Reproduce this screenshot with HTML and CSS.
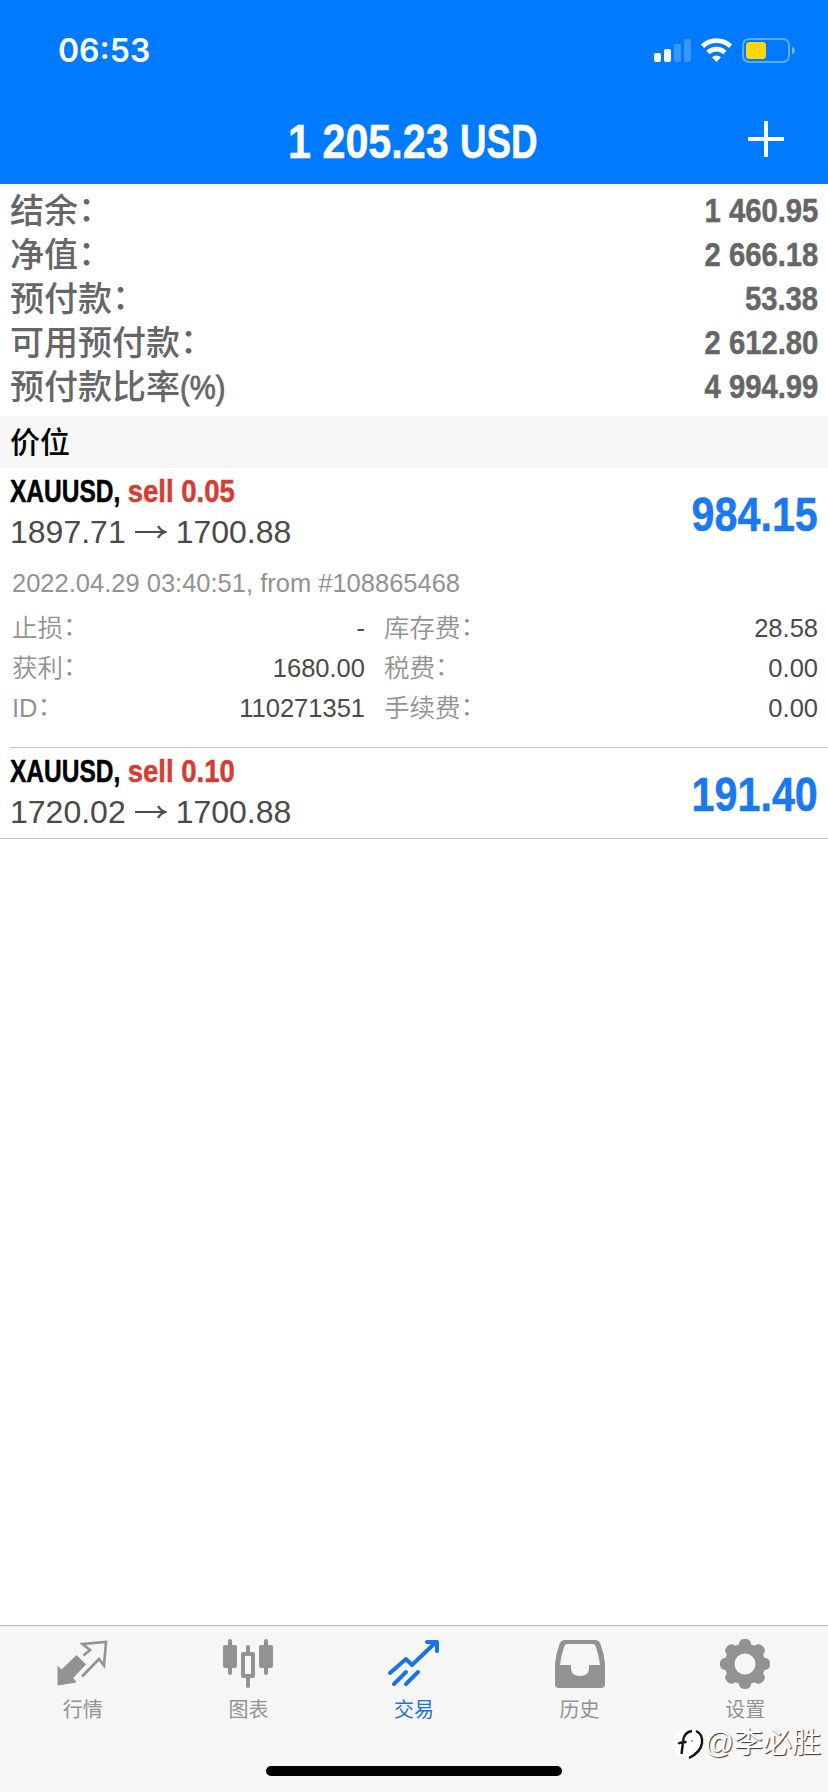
FILE: index.html
```html
<!DOCTYPE html>
<html lang="zh-CN">
<head>
  <meta charset="UTF-8">
  <meta name="viewport" content="width=device-width, initial-scale=1.0">
  <title>交易</title>
  <link rel="stylesheet" href="styles.css">
</head>
<body>

  <header class="header">
    <div class="statusBar">
      <span class="clock">06:53</span>
      <svg class="statusIcons" width="146" height="28" viewBox="0 0 146 28">
        <!-- signal -->
        <rect x="3" y="16" width="7" height="9" rx="2" fill="#fff"/>
        <rect x="13" y="12" width="7" height="13" rx="2" fill="#fff"/>
        <rect x="23" y="7" width="7" height="18" rx="2" fill="#fff" opacity=".22"/>
        <rect x="33" y="2" width="7" height="23" rx="2" fill="#fff" opacity=".22"/>
        <!-- wifi -->
        <g fill="none" stroke="#fff" stroke-width="4.8">
          <path d="M51.5 9.200a20.500 20.500 0 0 1 28 0"/>
          <path d="M57 15.500a12.500 12.500 0 0 1 17 0"/>
        </g>
        <path d="M65.500 25l-4.500-4.700a6.500 6.500 0 0 1 9 0z" fill="#fff"/>
        <!-- battery -->
        <rect x="92" y="2" width="46" height="23" rx="6" fill="none" stroke="#fff" stroke-width="2" opacity=".38"/>
        <path d="M141 9.500q3 1.500 3 4t-3 4z" fill="#fff" opacity=".45"/>
        <rect x="95" y="5" width="20" height="17" rx="3.500" fill="#ffd60a"/>
      </svg>
    </div>
    <div class="titleBar">
      <h1 class="title condensed">1 205.23 <span class="currency">USD</span></h1>
      <svg class="addButton" width="36" height="36" viewBox="0 0 36 36">
        <path d="M18 0v36M0 18h36" stroke="#fff" stroke-width="4"/>
      </svg>
    </div>
  </header>

  <main>
    <div class="summary">
      <div class="summaryRow"><span>结余<span class="colon">：</span></span><span class="amount condensed">1 460.95</span></div>
      <div class="summaryRow"><span>净值<span class="colon">：</span></span><span class="amount condensed">2 666.18</span></div>
      <div class="summaryRow"><span>预付款<span class="colon">：</span></span><span class="amount condensed">53.38</span></div>
      <div class="summaryRow"><span>可用预付款<span class="colon">：</span></span><span class="amount condensed">2 612.80</span></div>
      <div class="summaryRow"><span>预付款比率<span class="percent">(%)</span></span><span class="amount condensed">4 994.99</span></div>
    </div>

    <h2 class="sectionTitle">价位</h2>

    <section class="position">
      <div class="positionMain">
        <div>
          <div class="symbol condensed"><span class="pair">XAUUSD,</span> <span class="sell">sell 0.05</span></div>
          <div class="prices">
            <span>1897.71</span>
            <svg class="arrow" width="32" height="16" viewBox="0 0 32 16"><path d="M0 8h30M23 2q2.500 4.500 7 6q-4.500 1.500-7 6"/></svg>
            <span>1700.88</span>
          </div>
        </div>
        <div class="profit condensed">984.15</div>
      </div>
      <div class="opened">2022.04.29 03:40:51, from #108865468</div>
      <dl class="details">
        <dt>止损<span class="colon">：</span></dt><dd>-</dd>
        <dt>库存费<span class="colon">：</span></dt><dd>28.58</dd>
        <dt>获利<span class="colon">：</span></dt><dd>1680.00</dd>
        <dt>税费<span class="colon">：</span></dt><dd>0.00</dd>
        <dt>ID<span class="colon">：</span></dt><dd>110271351</dd>
        <dt>手续费<span class="colon">：</span></dt><dd>0.00</dd>
      </dl>
    </section>

    <section class="position last">
      <div class="positionMain">
        <div>
          <div class="symbol condensed"><span class="pair">XAUUSD,</span> <span class="sell">sell 0.10</span></div>
          <div class="prices">
            <span>1720.02</span>
            <svg class="arrow" width="32" height="16" viewBox="0 0 32 16"><path d="M0 8h30M23 2q2.500 4.500 7 6q-4.500 1.500-7 6"/></svg>
            <span>1700.88</span>
          </div>
        </div>
        <div class="profit condensed">191.40</div>
      </div>
    </section>
  </main>

  <footer class="footer">
    <nav class="tabs">
      <a class="tab">
        <svg width="52" height="52" viewBox="0 0 52 52">
          <path d="M1 28.500l3.500 3.500L19.500 17.500l9 9L15.700 40l3.300 4-18 3z" fill="#929292" stroke="#929292" stroke-linejoin="round"/>
          <path d="M26.500 17.500l6.500-5.500-7.500-6L49 4l-2 23.500-5-6.500-17 17.500" fill="none" stroke="#929292" stroke-width="2.600"/>
        </svg>
        <span>行情</span>
      </a>
      <a class="tab">
        <svg width="52" height="52" viewBox="0 0 52 52">
          <g fill="#929292">
            <rect x="6" y="1" width="4" height="36" rx="2"/>
            <rect x="1" y="7" width="14" height="23" rx="2"/>
            <rect x="42" y="1" width="4" height="36" rx="2"/>
            <rect x="37" y="7" width="14" height="23" rx="2"/>
            <rect x="24" y="7" width="4" height="9" rx="2"/>
            <rect x="24" y="38" width="4" height="12" rx="2"/>
          </g>
          <rect x="21" y="16" width="10" height="22" fill="none" stroke="#929292" stroke-width="4" stroke-linejoin="round"/>
        </svg>
        <span>图表</span>
      </a>
      <a class="tab active">
        <svg width="52" height="52" viewBox="0 0 52 52">
          <g fill="none" stroke="#1a73e8" stroke-width="4" stroke-linecap="round" stroke-linejoin="round">
            <path d="M2 35l16-14 6 6L48 4"/>
            <path d="M39 4h10v9M6 46l12-12M18 46l12-12"/>
          </g>
          <path d="M42 3h8v8z" fill="#1a73e8"/>
        </svg>
        <span>交易</span>
      </a>
      <a class="tab">
        <svg width="52" height="52" viewBox="0 0 52 52">
          <path fill="#929292" fill-rule="evenodd" d="M11 2h30q4 0 5.500 4Q50 15 51 26v20q0 4-4 4H5q-4 0-4-4V26Q2 15 5.500 6 7 2 11 2zM13 6q-2 0-3 3Q7 18 6 27h11v3q0 8 9 8t9-8v-3h11Q45 18 42 9q-1-3-3-3z"/>
        </svg>
        <span>历史</span>
      </a>
      <a class="tab">
        <svg width="52" height="52" viewBox="0 0 52 52">
          <g fill="#929292">
            <rect x="20" y="1" width="12" height="50" rx="5"/>
            <rect x="20" y="1" width="12" height="50" rx="5" transform="rotate(45 26 26)"/>
            <rect x="20" y="1" width="12" height="50" rx="5" transform="rotate(90 26 26)"/>
            <rect x="20" y="1" width="12" height="50" rx="5" transform="rotate(135 26 26)"/>
            <circle cx="26" cy="26" r="20.500"/>
          </g>
          <circle cx="26" cy="26" r="10.500" fill="#f6f6f6"/>
        </svg>
        <span>设置</span>
      </a>
    </nav>
    <div class="homeIndicator"></div>
    <div class="watermark">
      <svg width="32" height="38" viewBox="0 0 32 38">
        <circle cx="15" cy="19" r="15" fill="#fff"/>
        <path d="M8.500 30l1.500-12M5.500 20q1-2 8-2M10 17q1-9 9-10M23 7q7 3 6 12t-13 15" fill="none" stroke="#111" stroke-width="2.400"/>
        <circle cx="19" cy="17" r="1" fill="#999"/>
      </svg>
      <span>@李必胜</span>
    </div>
  </footer>

</body>
</html>
```
FILE: styles.css
```css
* {
  box-sizing: border-box;
}

body {
  margin: 0;
  height: 1792px;
  display: flex;
  flex-direction: column;
  overflow: hidden;
  background-color: #fff;
  font-family: "Liberation Sans", "Noto Sans CJK SC", sans-serif;
}

/* Narrowed bold face used for every amount */
.condensed {
  font-weight: bold;
  white-space: pre;
  -webkit-text-stroke: 0.5px currentColor;
  transform: scaleX(0.86);
}

/* Full-width colon sits a little above the baseline */
.colon {
  line-height: 1;
  vertical-align: 0.06em;
}

.header {
  height: 184px;
  background-color: #007aff;
  color: #fff;
}

.statusBar {
  height: 98px;
  padding: 3px 31px 0 58px;
  display: flex;
  justify-content: space-between;
  align-items: center;
}

.clock {
  font-family: Inter, sans-serif;
  font-size: 32px;
  font-weight: 600;
  line-height: 95px;
}

.titleBar {
  height: 86px;
  padding: 0 44px 0 288px;
  display: flex;
  justify-content: space-between;
}

.title {
  margin: 0;
  font-size: 48px;
  line-height: 88px;
  transform-origin: left;
}

/* Capitals are tighter than the digits */
.currency {
  display: inline-block;
  transform: scaleX(0.89);
  transform-origin: left;
}

.addButton {
  margin-top: 23px;
}

.summary {
  padding: 4px 10px 8px;
  height: 232px;
  color: #666;
}

.summaryRow {
  height: 44px;
  display: flex;
  justify-content: space-between;
  font-size: 34px;
  font-weight: 500;
  line-height: 46px;
}

.amount {
  line-height: 44px;
  transform-origin: right;
}

.percent {
  display: inline-block;
  line-height: 1;
  -webkit-text-stroke: 0.8px currentColor;
  transform: scaleX(0.86);
  transform-origin: left;
}

.sectionTitle {
  margin: 0;
  height: 52px;
  padding-left: 10px;
  background-color: #f6f6f6;
  font-size: 30px;
  font-weight: 500;
  line-height: 54px;
}

.position {
  height: 280px;
  margin-left: 10px;
  padding-right: 10px;
  border-bottom: 1px solid #c4c4c4;
}

.position.last {
  height: 91px;
  margin-left: 0;
  padding-left: 10px;
}

.positionMain {
  height: 90px;
  padding-top: 3px;
  display: flex;
  justify-content: space-between;
}

.symbol {
  font-size: 32px;
  line-height: 40px;
  transform-origin: left;
}

.pair {
  display: inline-block;
  margin-right: -16px;
  transform: scaleX(0.89);
  transform-origin: left;
}

.sell {
  color: #d63c32;
}

.prices {
  display: flex;
  align-items: center;
  font-size: 32px;
  line-height: 42px;
  color: #4a4a4a;
}

.arrow {
  margin: 0 9px;
  fill: none;
  stroke: #4a4a4a;
  stroke-width: 2;
}

.profit {
  font-size: 48px;
  line-height: 88px;
  color: #1a78f0;
  transform-origin: right;
}

.opened {
  padding-left: 2px;
  font-size: 25.5px;
  line-height: 50px;
  color: #929292;
}

.details {
  margin: 0;
  padding-left: 2px;
  display: grid;
  grid-template-columns: 110px 243px 130px 1fr;
  grid-auto-rows: 40px;
  font-size: 25.5px;
  font-weight: 350;
  line-height: 40px;
}

.details dt {
  color: #929292;
}

.details dd {
  margin: 0;
  text-align: right;
  color: #4a4a4a;
}

.details dd:nth-of-type(odd) + dt {
  padding-left: 19px;
}

.footer {
  position: relative;
  margin-top: auto;
  height: 167px;
  border-top: 1px solid #b2b2b2;
  background-color: #f6f6f6;
}

.tabs {
  display: flex;
}

.tab {
  flex: 1;
  padding-top: 12px;
  display: flex;
  flex-direction: column;
  align-items: center;
  gap: 6px;
  font-size: 20px;
  line-height: 28px;
  color: #929292;
}

.tab.active {
  color: #1a73e8;
}

.homeIndicator {
  width: 296px;
  height: 10px;
  margin: 42px auto 0;
  border-radius: 5px;
  background-color: #000;
}

.watermark {
  position: absolute;
  right: 7px;
  top: 98px;
  display: flex;
  align-items: center;
  font-size: 29px;
  line-height: 36px;
  color: #fff;
  text-shadow: 1px 1px 1px #333;
}
```
